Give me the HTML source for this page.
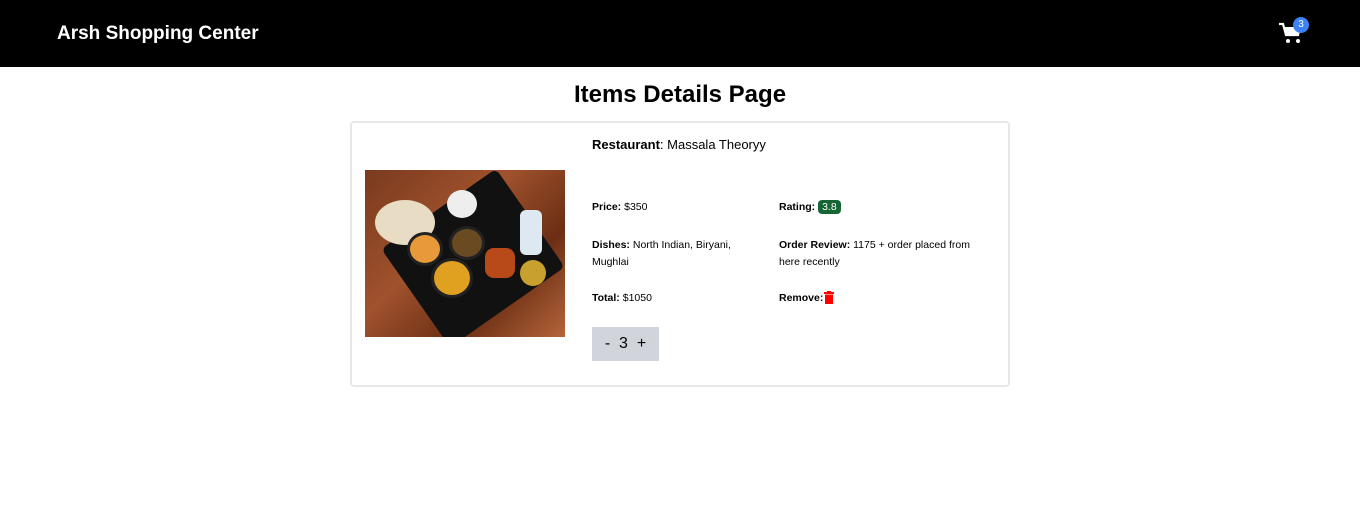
<!DOCTYPE html>
<html><head><style>
*{margin:0;padding:0;box-sizing:border-box}
body{width:1360px;height:514px;background:#fff;font-family:"Liberation Sans",sans-serif;color:#000;position:relative;overflow:hidden}
.nav{position:absolute;left:0;top:0;width:1360px;height:67px;background:#000}
.brand{position:absolute;left:57px;top:23px;color:#fff;font-weight:bold;font-size:19px}
.cart{position:absolute;left:1279px;top:22px}
.badge{position:absolute;left:1293px;top:17px;width:16px;height:16px;border-radius:50%;background:#3b82f6;color:#fff;font-size:10px;text-align:center;line-height:16px}
h1{position:absolute;left:0;width:1360px;top:81px;text-align:center;font-size:24px;font-weight:bold}
.card{position:absolute;left:350px;top:121px;width:660px;height:266px;border:2px solid #e5e7eb;border-radius:4px}
.img{position:absolute;left:365px;top:170px;width:200px;height:167px;overflow:hidden;background:linear-gradient(135deg,#7a3a1e,#a0522d 40%,#6b2e14 70%,#b5653a)}
.t{position:absolute;font-size:10.5px;line-height:17px}
.t b{font-weight:bold}
.qty{position:absolute;left:592px;top:327px;width:67px;height:34px;background:#d1d5db;font-size:16px;line-height:34px;text-align:center}
.rate{background:#166534;color:#fff;border-radius:4px;padding:1px 4px}
</style></head><body>
<div class="nav"><div class="brand">Arsh Shopping Center</div>
<svg class="cart" width="24" height="22" viewBox="0 0 24 22"><path d="M0 2h4l3 11h13" fill="none" stroke="#fff" stroke-width="2.2"/><path d="M5 5h18l-3 8H7z" fill="#fff"/><circle cx="9" cy="19" r="2" fill="#fff"/><circle cx="19" cy="19" r="2" fill="#fff"/></svg>
<div class="badge">3</div></div>
<h1>Items Details Page</h1>
<div class="card"></div>
<div class="img">
<div style="position:absolute;left:38px;top:28px;width:140px;height:120px;background:#111;transform:rotate(-35deg);border-radius:6px"></div>
<div style="position:absolute;left:10px;top:30px;width:60px;height:45px;background:#e8dcc4;border-radius:50%"></div>
<div style="position:absolute;left:82px;top:20px;width:30px;height:28px;background:#eee;border-radius:50%"></div>
<div style="position:absolute;left:42px;top:62px;width:36px;height:34px;background:#e89a3a;border-radius:50%;border:3px solid #222"></div>
<div style="position:absolute;left:84px;top:56px;width:36px;height:34px;background:#6a4a20;border-radius:50%;border:3px solid #222"></div>
<div style="position:absolute;left:66px;top:88px;width:42px;height:40px;background:#e0a020;border-radius:50%;border:3px solid #222"></div>
<div style="position:absolute;left:120px;top:78px;width:30px;height:30px;background:#b84a1a;border-radius:30%"></div>
<div style="position:absolute;left:155px;top:40px;width:22px;height:45px;background:#dde8f0;border-radius:6px"></div>
<div style="position:absolute;left:155px;top:90px;width:26px;height:26px;background:#c8a030;border-radius:50%"></div>
</div>
<div class="t" style="left:592px;top:136px;font-size:13px"><b>Restaurant</b>: Massala Theoryy</div>
<div class="t" style="left:592px;top:199px"><b>Price:</b> $350</div>
<div class="t" style="left:779px;top:199px"><b>Rating:</b> <span class="rate">3.8</span></div>
<div class="t" style="left:592px;top:237px;width:160px"><b>Dishes:</b> North Indian, Biryani, Mughlai</div>
<div class="t" style="left:779px;top:237px;width:210px"><b>Order Review:</b> 1175 + order placed from here recently</div>
<div class="t" style="left:592px;top:290px"><b>Total:</b> $1050</div>
<div class="t" style="left:779px;top:290px"><b>Remove:</b></div>
<svg style="position:absolute;left:824px;top:291px" width="10" height="13" viewBox="0 0 10 13"><rect x="0" y="1" width="10" height="2" fill="#f00"/><rect x="3" y="0" width="4" height="2" fill="#f00"/><rect x="1" y="3.5" width="8" height="9.5" fill="#f00"/></svg>
<div class="qty">-&nbsp; 3 &nbsp;+</div>
</body></html>
